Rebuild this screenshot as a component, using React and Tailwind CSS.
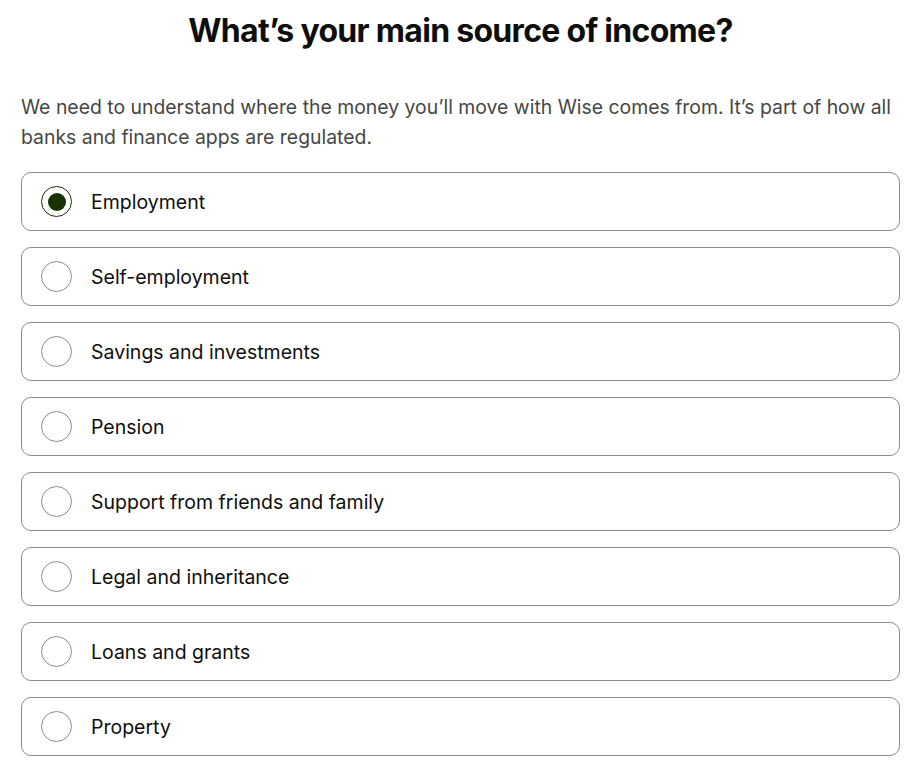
import React, { useState } from 'react';

const options = [
  'Employment',
  'Self-employment',
  'Savings and investments',
  'Pension',
  'Support from friends and family',
  'Legal and inheritance',
  'Loans and grants',
  'Property',
];

export default function App() {
  const [selected, setSelected] = useState('Employment');

  return (
    <div className="min-h-screen bg-white pl-[21px] pr-[10px] font-['Inter',sans-serif] text-[#0e0f0c]">
      {/* HEADER */}
      <h1 className="pt-[11px] text-center text-[32px] font-bold leading-[40px] tracking-[-0.7px]">
        What’s your main source of income?
      </h1>

      <p className="mt-[41px] text-[19.4px] leading-[30px] text-[#454745]">
        We need to understand where the money you’ll move with Wise comes from. It’s part of how all banks and finance apps are regulated.
      </p>

      {/* OPTIONS */}
      <div className="mt-[20px] flex flex-col gap-[16px]">
        {options.map((label) => {
          const active = selected === label;
          return (
            <button
              key={label}
              type="button"
              onClick={() => setSelected(label)}
              className="flex h-[59px] w-full items-center rounded-[10px] border border-[#8c8c8c] bg-white pl-[19px] text-left"
            >
              <span
                className={
                  active
                    ? 'flex h-[31px] w-[31px] shrink-0 items-center justify-center rounded-full border border-[#163300]'
                    : 'flex h-[31px] w-[31px] shrink-0 items-center justify-center rounded-full border border-[#8c8c8c]'
                }
              >
                {active && <span className="h-[18px] w-[18px] rounded-full bg-[#163300]" />}
              </span>
              <span className="ml-[19px] text-[19.5px] leading-[24px] text-[#0e0f0c]">{label}</span>
            </button>
          );
        })}
      </div>
    </div>
  );
}
